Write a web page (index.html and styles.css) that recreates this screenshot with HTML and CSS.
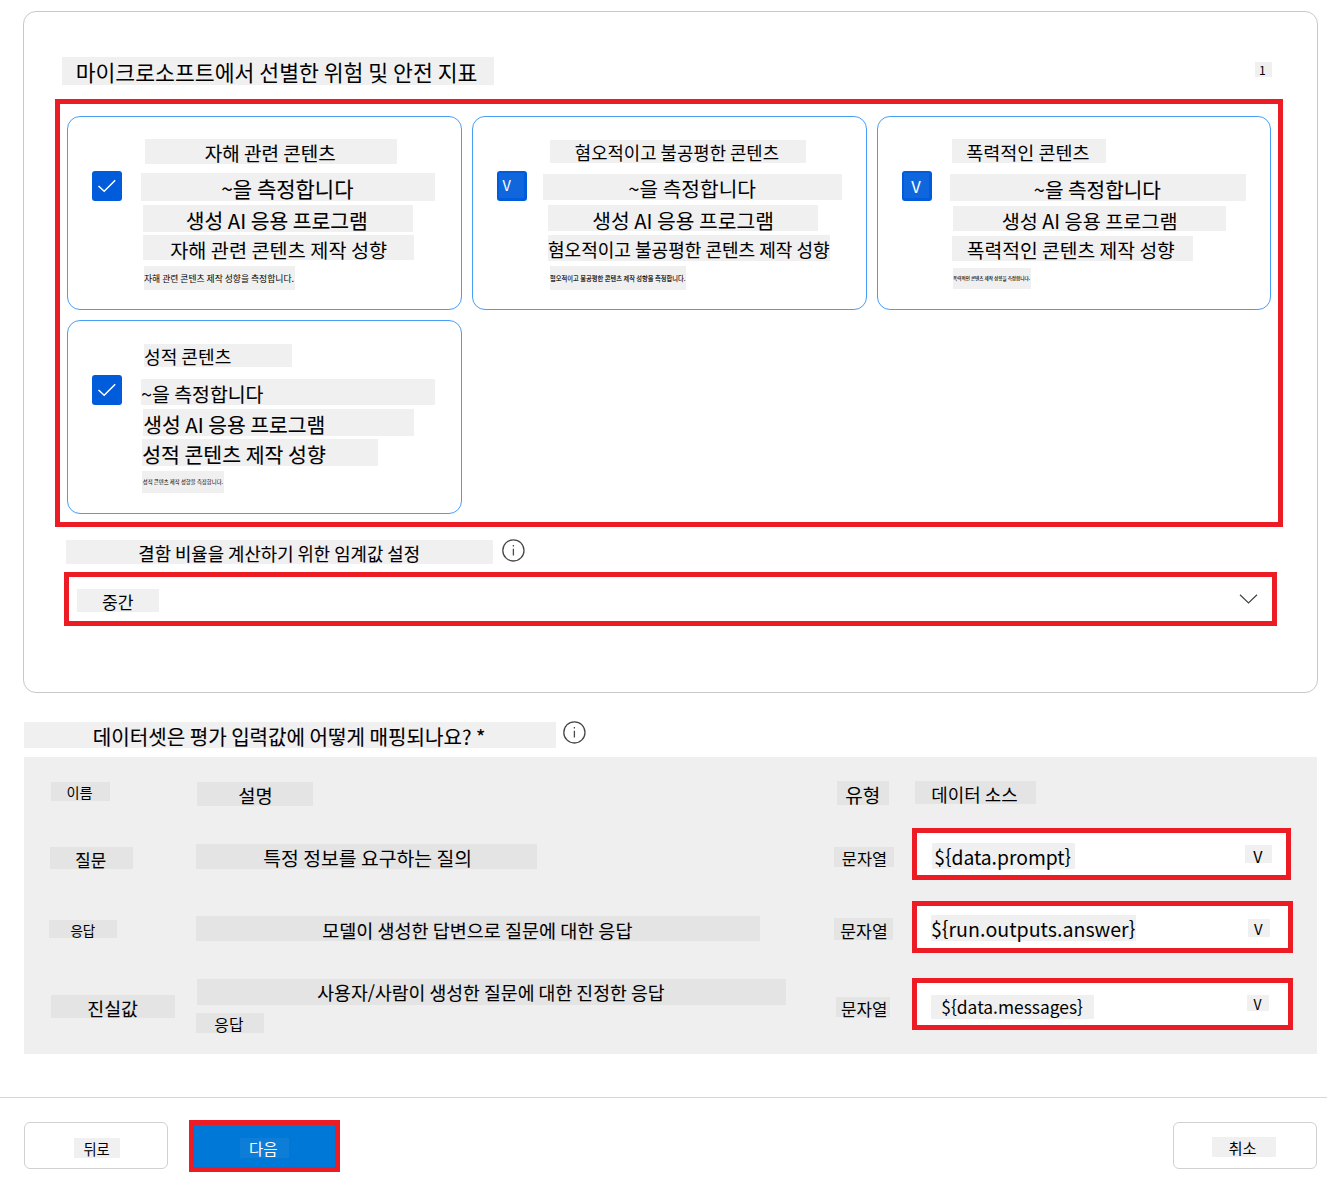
FILE: index.html
```html
<!DOCTYPE html>
<html lang="ko">
<head>
<meta charset="utf-8">
<title>위험 및 안전 지표</title>
<link rel="stylesheet" href="styles.css">
</head>
<body>
<main class="page">
  <section class="panel">
    <header class="panel-head">
      <h2 class="tag title">마이크로소프트에서 선별한 위험 및 안전 지표</h2>
      <span class="tag count">1</span>
    </header>

    <div class="metrics">
      <article class="card">
        <span class="check"><svg viewBox="0 0 30 30"><path d="M6.5 15 L12.2 20.3 L23.2 9.3"/></svg></span>
        <div class="card-body">
          <h3 class="tag dark harm-1">자해 관련 콘텐츠</h3>
          <p class="tag dark harm-2">~을 측정합니다</p>
          <p class="tag dark harm-3">생성 AI 응용 프로그램</p>
          <p class="tag harm-4">자해 관련 콘텐츠 제작 성향</p>
          <p class="tag harm-5">자해 관련 콘텐츠 제작 성향을 측정합니다.</p>
        </div>
      </article>
      <article class="card">
        <span class="check"><span class="tag mark mark-hate">V</span></span>
        <div class="card-body">
          <h3 class="tag hate-1">혐오적이고 불공평한 콘텐츠</h3>
          <p class="tag hate-2">~을 측정합니다</p>
          <p class="tag hate-3">생성 AI 응용 프로그램</p>
          <p class="tag dark hate-4">혐오적이고 불공평한 콘텐츠 제작 성향</p>
          <p class="tag dark hate-5">혐오적이고 불공평한 콘텐츠 제작 성향을 측정합니다.</p>
        </div>
      </article>
      <article class="card">
        <span class="check"><span class="tag mark mark-violent">V</span></span>
        <div class="card-body">
          <h3 class="tag violent-1">폭력적인 콘텐츠</h3>
          <p class="tag dark violent-2">~을 측정합니다</p>
          <p class="tag violent-3">생성 AI 응용 프로그램</p>
          <p class="tag violent-4">폭력적인 콘텐츠 제작 성향</p>
          <p class="tag dark violent-5">폭력적인 콘텐츠 제작 성향을 측정합니다.</p>
        </div>
      </article>
      <article class="card">
        <span class="check"><svg viewBox="0 0 30 30"><path d="M6.5 15 L12.2 20.3 L23.2 9.3"/></svg></span>
        <div class="card-body">
          <h3 class="tag sexual-1">성적 콘텐츠</h3>
          <p class="tag dark sexual-2">~을 측정합니다</p>
          <p class="tag dark sexual-3">생성 AI 응용 프로그램</p>
          <p class="tag dark sexual-4">성적 콘텐츠 제작 성향</p>
          <p class="tag sexual-5">성적 콘텐츠 제작 성향을 측정합니다.</p>
        </div>
      </article>
    </div>

    <div class="threshold-label">
      <label class="tag dark threshold">결함 비율을 계산하기 위한 임계값 설정</label>
      <svg class="info" viewBox="0 0 24 24"><circle cx="12" cy="12" r="10.6"/><path d="M12 10.3V17M12 6.6V8.2"/></svg>
    </div>
    <div class="select select-threshold">
      <span class="tag medium">중간</span>
      <svg class="chevron" viewBox="0 0 20 12"><path d="M1.5 1.7 L10 10 L18.5 1.7"/></svg>
    </div>
  </section>

  <div class="mapping-head">
    <h2 class="tag dark mapping-title">데이터셋은 평가 입력값에 어떻게 매핑되나요? *</h2>
    <svg class="info" viewBox="0 0 24 24"><circle cx="12" cy="12" r="10.6"/><path d="M12 10.3V17M12 6.6V8.2"/></svg>
  </div>

  <section class="mapping">
    <div class="cell"><span class="tag th-name">이름</span></div>
    <div class="cell"><span class="tag dark th-desc">설명</span></div>
    <div class="cell"><span class="tag th-type">유형</span></div>
    <div class="cell"><span class="tag th-source">데이터 소스</span></div>

    <div class="cell"><span class="tag dark q-name">질문</span></div>
    <div class="cell"><span class="tag q-desc">특정 정보를 요구하는 질의</span></div>
    <div class="cell"><span class="tag q-type">문자열</span></div>
    <div class="cell"><div class="select source source-q"><span class="tag q-value">${data.prompt}</span><span class="tag q-arrow">V</span></div></div>

    <div class="cell"><span class="tag dark a-name">응답</span></div>
    <div class="cell"><span class="tag dark a-desc">모델이 생성한 답변으로 질문에 대한 응답</span></div>
    <div class="cell"><span class="tag a-type">문자열</span></div>
    <div class="cell"><div class="select source"><span class="tag a-value">${run.outputs.answer}</span><span class="tag a-arrow">V</span></div></div>

    <div class="cell"><span class="tag dark g-name">진실값</span></div>
    <div class="cell"><span class="tag dark g-desc">사용자/사람이 생성한 질문에 대한 진정한 응답</span><span class="tag g-desc-2">응답</span></div>
    <div class="cell"><span class="tag g-type">문자열</span></div>
    <div class="cell"><div class="select source"><span class="tag g-value">${data.messages}</span><span class="tag g-arrow">V</span></div></div>
  </section>

  <footer class="actions">
    <button class="btn"><span class="tag back">뒤로</span></button>
    <button class="btn btn-next"><span class="tag next">다음</span></button>
    <button class="btn btn-cancel"><span class="tag cancel">취소</span></button>
  </footer>
</main>
</body>
</html>
```
FILE: styles.css
```css
* { box-sizing: border-box; }

body {
  margin: 0;
  background: #fff;
  color: #000;
  font-family: "Noto Sans CJK KR", "Noto Sans", sans-serif;
}

.page { width: 1327px; height: 1177px; overflow: hidden; padding-top: 11px; }

/* Text on a shaded strip: --x is the text inset, --c the text's centre line */
.tag {
  --x: 0px;
  --c: 12px;
  display: block;
  flex: none;
  margin: 0;
  padding-left: calc(var(--x) - .04em);
  background: #f0f0f0;
  font-weight: 400;
  line-height: calc((var(--c) - .056em) * 2);
  white-space: nowrap;
  word-spacing: -.055em;
}
.dark { -webkit-text-stroke: .1px currentColor; }

/* Panel */
.panel {
  width: 1295px;
  height: 682px;
  margin-left: 23px;
  border: 1px solid #c8c8c8;
  border-radius: 13px;
}
.panel-head {
  display: flex;
  justify-content: space-between;
  align-items: flex-start;
  height: 87px;
  padding: 45px 45px 0 38px;
}
.title { width: 432px; height: 28px; font-size: 21.6px; --x: 14.5px; --c: 16.5px; }
.count { width: 17px; height: 15px; margin-top: 5px; font-size: 12px; --x: 4.5px; --c: 9px; }

/* Metric cards */
.metrics {
  display: grid;
  grid-template-columns: 395px 395px 394px;
  grid-auto-rows: 194px;
  gap: 10px;
  width: 1228px;
  height: 428px;
  margin-left: 31px;
  padding: 12px 7px;
  border: 5px solid #ed1c24;
}
.card {
  display: flex;
  align-items: flex-start;
  gap: 19px;
  padding: 22px 0 0 24px;
  border: 1px solid #479ef5;
  border-radius: 13px;
}
.check {
  flex: none;
  width: 30px;
  height: 30px;
  margin-top: 32px;
  padding: 2px;
  border-radius: 3px;
  background: #005cdb;
}
.check svg { display: block; width: 30px; height: 30px; margin: -2px; }
.check path { fill: none; stroke: #fff; stroke-width: 1.5; }
.mark { width: 25px; height: 25px; background: #1066dc; color: #fff; }
.mark-hate { font-size: 14.5px; --x: 4px; --c: 12.5px; }
.mark-violent { font-size: 16.5px; --x: 8px; --c: 14.5px; }

.harm-1 { width: 252px; height: 25px; margin: 0 0 9px 4px; font-size: 19px; --x: 60.5px; --c: 15.5px; }
.harm-2 { width: 294px; height: 28px; margin: 0 0 4px; font-size: 21px; --x: 81px; --c: 16.5px; }
.harm-3 { width: 270px; height: 27px; margin: 0 0 3px 2px; font-size: 20.4px; --x: 43.5px; --c: 16.5px; }
.harm-4 { width: 271px; height: 25px; margin: 0 0 6px 2px; font-size: 19.7px; --x: 28px; --c: 16.5px; }
.harm-5 { width: 151px; height: 24px; margin: 0 0 0 3px; font-size: 8.8px; --x: 0px; --c: 13px; }

.hate-1 { width: 256px; height: 23px; margin: 1px 0 11px 4px; font-size: 17.8px; --x: 25.5px; --c: 13.5px; }
.hate-2 { width: 299px; height: 26px; margin: 0 0 5px -3px; font-size: 20.3px; --x: 86px; --c: 16px; }
.hate-3 { width: 270px; height: 26px; margin: 0 0 4px 2px; font-size: 20.35px; --x: 45px; --c: 16.5px; }
.hate-4 { width: 282px; height: 26px; margin: 0 0 5px 2px; font-size: 18.05px; --x: .5px; --c: 16px; }
.hate-5 { width: 136px; height: 24px; margin: 0 0 0 4px; font-size: 6.27px; --x: 0px; --c: 13px; }

.violent-1 { width: 154px; height: 24px; margin: 0 0 11px 1px; font-size: 18.5px; --x: 15px; --c: 14.7px; }
.violent-2 { width: 296px; height: 27px; margin: 0 0 5px -1px; font-size: 20.2px; --x: 84.5px; --c: 17px; }
.violent-3 { width: 273px; height: 25px; margin: 0 0 5px 2px; font-size: 19.7px; --x: 49.5px; --c: 16.3px; }
.violent-4 { width: 241px; height: 25px; margin: 0 0 7px 1px; font-size: 19.3px; --x: 15.5px; --c: 15.3px; }
.violent-5 { width: 78px; height: 21px; margin: 0 0 0 2px; font-size: 4.58px; --x: 0px; --c: 10.5px; }

.sexual-1 { width: 148px; height: 23px; margin: 1px 0 12px 3px; font-size: 18.1px; --x: .5px; --c: 13.9px; }
.sexual-2 { width: 294px; height: 26px; margin: 0 0 4px; font-size: 19.4px; --x: 1px; --c: 16px; }
.sexual-3 { width: 271px; height: 27px; margin: 0 0 3px 2px; font-size: 20.4px; --x: 1px; --c: 16.3px; }
.sexual-4 { width: 236px; height: 27px; margin: 0 0 5px 1px; font-size: 20.5px; --x: 1px; --c: 16.5px; }
.sexual-5 { width: 82px; height: 22px; margin: 0 0 0 1px; font-size: 5.37px; --x: 1px; --c: 11.5px; }

/* Threshold */
.threshold-label {
  display: flex;
  align-items: flex-start;
  gap: 8px;
  height: 45px;
  padding: 11px 0 0 42px;
}
.threshold { width: 427px; height: 24px; margin-top: 2px; font-size: 17.8px; --x: 73px; --c: 14px; }
.info { flex: none; width: 24px; height: 24px; transform: translate(.4px, .4px); }
.info circle, .info path { fill: none; stroke: #484848; stroke-width: 1.3; }

.select {
  display: flex;
  justify-content: space-between;
  align-items: flex-start;
  border: 5px solid #ed1c24;
  background: #fff;
}
.select-threshold { width: 1213px; height: 54px; margin-left: 40px; padding: 12px 14px 0 8px; }
.medium { width: 82px; height: 23px; font-size: 17.2px; --x: 25.7px; --c: 13.7px; }
.chevron { width: 20px; height: 12px; margin-top: 4px; transform: translateX(.5px); }
.chevron path { fill: none; stroke: #444; stroke-width: 1.2; }

/* Mapping table */
.mapping-head {
  display: flex;
  align-items: flex-start;
  gap: 6px;
  height: 64px;
  padding: 27px 0 0 24px;
}
.mapping-title { width: 532px; height: 26px; margin-top: 2px; font-size: 20.1px; --x: 69.5px; --c: 15.7px; }

.mapping {
  display: grid;
  grid-template-columns: 147px 638px 78px 1fr;
  grid-template-rows: 71px 73px 77px 76px;
  width: 1293px;
  margin-left: 24px;
  padding-left: 25px;
  background: #efefef;
}
.cell { display: flex; flex-direction: column; align-items: flex-start; }
.cell > .tag { background: #e4e4e4; }

.th-name { width: 59px; height: 19px; margin: 25px 0 0 2px; font-size: 14.2px; --x: 16px; --c: 11.3px; }
.th-desc { width: 116px; height: 24px; margin: 25px 0 0 1px; font-size: 18.7px; --x: 42px; --c: 14px; }
.th-type { width: 52px; height: 24px; margin: 24px 0 0 3px; font-size: 19px; --x: 9px; --c: 14.7px; }
.th-source { width: 121px; height: 23px; margin: 24px 0 0 3px; font-size: 17.9px; --x: 17px; --c: 14.5px; }

.q-name { width: 83px; height: 22px; margin: 19px 0 0 1px; font-size: 16.8px; --x: 26px; --c: 14px; }
.q-desc { width: 341px; height: 25px; margin-top: 16px; font-size: 19.35px; --x: 68px; --c: 15.5px; }
.q-type { width: 60px; height: 20px; margin-top: 19px; font-size: 16.4px; --x: 8.5px; --c: 12.3px; }

.a-name { width: 68px; height: 18px; margin-top: 19px; font-size: 13.5px; --x: 22px; --c: 11.2px; }
.a-desc { width: 564px; height: 25px; margin-top: 15px; font-size: 18.5px; --x: 127px; --c: 15.6px; }
.a-type { width: 59px; height: 22px; margin-top: 17px; font-size: 17.2px; --x: 7px; --c: 14px; }

.g-name { width: 124px; height: 23px; margin: 17px 0 0 2px; font-size: 18.4px; --x: 37px; --c: 14.8px; }
.g-desc { width: 589px; height: 26px; margin: 1px 0 8px 1px; font-size: 18.3px; --x: 121px; --c: 14.8px; }
.g-desc-2 { width: 68px; height: 20px; font-size: 15.9px; --x: 19px; --c: 12.7px; }
.g-type { width: 54px; height: 20px; margin: 19px 0 0 2px; font-size: 16.8px; --x: 5.7px; --c: 13.2px; }

.source { width: 381px; height: 52px; }
.source-q { width: 379px; }
.q-value { width: 143px; height: 26px; margin: 10px 0 0 15px; font-size: 19.3px; --x: 3px; --c: 15.5px; }
.a-value { width: 205px; height: 26px; margin: 9px 0 0 14px; font-size: 19.6px; --x: .5px; --c: 15px; }
.g-value { width: 163px; height: 24px; margin: 12px 0 0 14px; font-size: 17.4px; --x: 11px; --c: 12.5px; }
.q-arrow { width: 27px; height: 18px; margin: 12px 14px 0 0; font-size: 16px; --x: 9px; --c: 12px; }
.a-arrow { width: 22px; height: 18px; margin: 13px 18px 0 0; font-size: 15px; --x: 6.5px; --c: 10.5px; }
.g-arrow { width: 22px; height: 16px; margin: 12px 19px 0 0; font-size: 14px; --x: 7px; --c: 10px; }

/* Footer */
.actions {
  display: flex;
  align-items: flex-start;
  margin-top: 43px;
  padding: 24px 10px 0 24px;
  border-top: 1px solid #d6d6d6;
}
.btn {
  display: flex;
  align-items: flex-start;
  width: 144px;
  height: 47px;
  padding: 0;
  border: 1px solid #d1d1d1;
  border-radius: 6px;
  background: #fff;
  color: #000;
  font: inherit;
  text-align: left;
}
.btn-next {
  width: 151px;
  height: 52px;
  margin: -2px 0 0 21px;
  border: 5px solid #ed1c24;
  border-radius: 0;
  background: #0078d7;
  color: #fff;
}
.btn-cancel { margin-left: auto; }
.back { width: 46px; height: 20px; margin: 15px 0 0 49px; font-size: 14.3px; --x: 10px; --c: 11.7px; }
.next { width: 49px; height: 20px; margin: 13px 0 0 46px; font-size: 15.5px; background: #0d7dd8; --x: 9.5px; --c: 11.2px; }
.cancel { width: 64px; height: 20px; margin: 14px 0 0 38px; font-size: 15.3px; --x: 17px; --c: 11.2px; }
```
